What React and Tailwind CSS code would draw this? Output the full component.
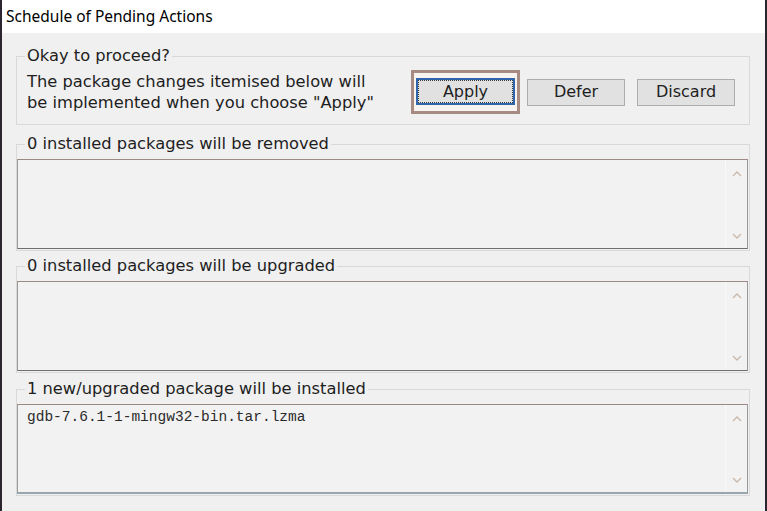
const UI = { fontFamily: '"DejaVu Sans", Verdana, sans-serif' }

function Chevron({ up }) {
  return (
    <svg width="10" height="6" viewBox="0 0 10 6" fill="none" stroke="#c9b8aa" strokeWidth="1.3">
      {up ? <polyline points="1,5 5,1 9,5" /> : <polyline points="1,1 5,5 9,1" />}
    </svg>
  )
}

function ListBox({ children, heavyBottom }) {
  return (
    <div
      className={`mt-[6px] mr-px flex h-[90px] border border-[#9a9a9a] border-t-[#9c8a82] bg-[#f2f2f2] ${
        heavyBottom ? "border-b-2 border-b-[#9aa6ae]" : "border-b-[#6f6f6f]"
      }`}
    >
      <div className="flex-1 pl-[9px] pt-[3px]">{children}</div>
      <div className="flex w-[22px] flex-col items-center justify-between border-l border-dotted border-white pt-[11px] pb-[9px]">
        <Chevron up />
        <Chevron />
      </div>
    </div>
  )
}

function Group({ title, className = "", children }) {
  return (
    <fieldset className={`ml-[14px] mr-[15px] border border-[#d9d9d9] ${className}`}>
      <legend className="ml-[8px] px-[2px] text-[16.3px] leading-[18px] text-[#1e1e1e]" style={UI}>
        {title}
      </legend>
      {children}
    </fieldset>
  )
}

export default function App() {
  return (
    <div className="flex h-[511px] w-[767px] flex-col border-x-2 border-[#2b2530] bg-[#f0f0f0]">
      {/* title bar */}
      <div
        className="flex h-[33px] items-center bg-white pl-1 text-[15.5px] text-black"
        style={{ fontFamily: '"Noto Sans", sans-serif' }}
      >
        Schedule of Pending Actions
      </div>

      {/* confirm group */}
      <Group title="Okay to proceed?" className="mt-[14px] pb-[10px]">
        <div className="flex items-center justify-between pt-[5px] pr-[14px] pl-[10px]">
          <p className="text-[16.3px] leading-[21px] text-[#1e1e1e]" style={UI}>
            The package changes itemised below will
            <br />
            be implemented when you choose "Apply"
          </p>
          <div className="flex items-center text-[16px] text-[#1e1e1e]" style={UI}>
            <div className="h-[44px] w-[109px] border-[3px] border-[#a68c82] bg-[#f6f3f1] px-[2px] pt-[5px]">
              <div className="h-[27px] border-2 border-[#2f66ab] bg-[#e1e1e1]">
                <div className="flex h-full items-center justify-center border border-dotted border-[#3a3a3a]">
                  Apply
                </div>
              </div>
            </div>
            <button className="ml-[7px] flex h-[27px] w-[98px] items-center justify-center border border-[#adadad] bg-[#e1e1e1]">
              Defer
            </button>
            <button className="ml-[12px] flex h-[27px] w-[98px] items-center justify-center border border-[#adadad] bg-[#e1e1e1]">
              Discard
            </button>
          </div>
        </div>
      </Group>

      <Group title="0 installed packages will be removed" className="mt-[10px] pb-px">
        <ListBox />
      </Group>

      <Group title="0 installed packages will be upgraded" className="mt-[6px] pb-px">
        <ListBox />
      </Group>

      <Group title="1 new/upgraded package will be installed" className="mt-[7px] pb-px">
        <ListBox heavyBottom>
          <div
            className="text-[14.5px] leading-[18px] text-[#2a2a2a]"
            style={{ fontFamily: '"Liberation Mono", monospace' }}
          >
            gdb-7.6.1-1-mingw32-bin.tar.lzma
          </div>
        </ListBox>
      </Group>
    </div>
  )
}
